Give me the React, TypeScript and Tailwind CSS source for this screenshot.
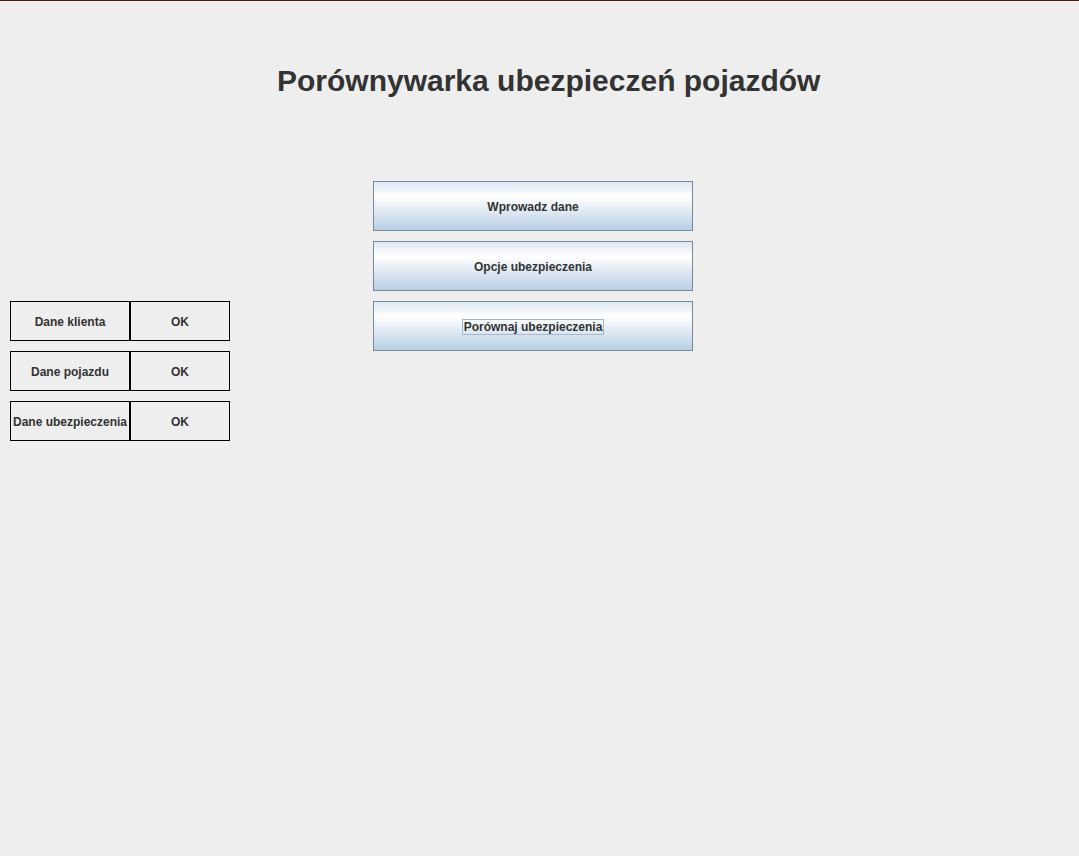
import type {FC} from "react";

const font = {fontFamily: '"Liberation Sans", Arial, sans-serif'};

const MenuButton: FC<{label: string; focused?: boolean}> = ({label, focused}) => {
    return <button className="flex items-center justify-center w-[320px] h-[50px] pt-[2px] border border-[#7a8a99] bg-[linear-gradient(to_bottom,#dde8f3_0%,#ffffff_30%,#b8cfe5_100%)] text-[12px] font-bold text-[#333333]">
        <span className={focused ? "border border-[#a3b8cc] px-px leading-[14px]" : "leading-[14px]"}>{label}</span>
    </button>;
};

const StatusRow: FC<{label: string}> = ({label}) => {
    return <div className="flex h-10 text-[12px] font-bold text-[#333333]">
        <div className="flex items-center justify-center w-[120px] pt-[2px] border border-black">{label}</div>
        <div className="flex items-center justify-center w-[100px] pt-[2px] border border-black">OK</div>
    </div>;
};

export default function App() {
    return <div style={font} className="w-[1079px] h-[856px] bg-[#eeeeee] border-t border-[#4a1c14] overflow-hidden">
        <h1 className="pt-[62px] pl-[277px] text-[30px] leading-[36px] font-bold text-[#333333]">Porównywarka ubezpieczeń pojazdów</h1>
        <div className="flex mt-[82px]">
            <div className="flex flex-col gap-[10px] ml-[10px] mt-[120px]">
                <StatusRow label="Dane klienta"/>
                <StatusRow label="Dane pojazdu"/>
                <StatusRow label="Dane ubezpieczenia"/>
            </div>
            <div className="flex flex-col gap-[10px] ml-[143px]">
                <MenuButton label="Wprowadz dane"/>
                <MenuButton label="Opcje ubezpieczenia"/>
                <MenuButton label="Porównaj ubezpieczenia" focused/>
            </div>
        </div>
    </div>;
}
